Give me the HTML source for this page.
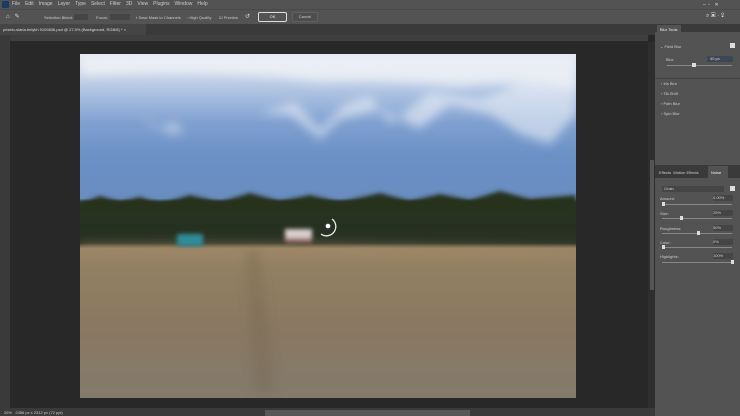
<!DOCTYPE html>
<html><head><meta charset="utf-8"><style>
*{margin:0;padding:0;box-sizing:border-box}
body{width:740px;height:416px;overflow:hidden;background:#282828;font-family:"Liberation Sans",sans-serif;font-size:5px;color:#ccc;position:relative}
.abs{position:absolute}
.menu{left:0;top:0;width:740px;height:9px;background:#535353}
.menu span{margin-right:5px}
.opt{left:0;top:9px;width:740px;height:15px;background:#535353;border-top:1px solid #4a4a4a}
.tab{left:0;top:24px;width:740px;height:11px;background:#3a3a3a}
.ruler{left:10px;top:35px;width:638px;height:7px;background:#3f3f3f;border-bottom:1px solid #2a2a2a}
.lt{left:0;top:35px;width:10px;height:373px;background:#3a3a3a}
.panel{left:655px;top:24px;width:85px;height:392px;background:#535353}
.txt{white-space:nowrap}
.o{font-size:4px;top:15px}
.btn{border:1px solid #aaa;border-radius:2px;text-align:center;line-height:8px;font-size:4px}
.field{background:#454545;height:6px}
</style></head><body>
<div class="abs menu txt" style="padding:2px 0 0 12px;line-height:5px"><span style="position:absolute;left:2px;top:1px;width:7px;height:7px;background:#1d3a66;border-radius:1px"></span><span>File</span><span>Edit</span><span>Image</span><span>Layer</span><span>Type</span><span>Select</span><span>Filter</span><span>3D</span><span>View</span><span>Plugins</span><span>Window</span><span>Help</span></div>
<div class="abs txt" style="left:703px;top:2px;color:#ddd">–&nbsp;&nbsp;▫&nbsp;&nbsp;&nbsp;✕</div>
<div class="abs opt"></div>
<div class="abs txt" style="left:6px;top:13px;color:#ddd;font-size:6px">⌂&nbsp;&nbsp;&nbsp;✎</div>
<div class="abs txt o" style="left:44px">Selection Bleed:</div><div class="abs field" style="left:74px;top:14px;width:14px"></div>
<div class="abs txt o" style="left:96px">Focus:</div><div class="abs field" style="left:110px;top:14px;width:20px"></div>
<div class="abs txt o" style="left:136px">▪ Save Mask to Channels</div>
<div class="abs txt o" style="left:187px">▫ High Quality</div>
<div class="abs txt o" style="left:219px">☑ Preview</div>
<div class="abs txt" style="left:245px;top:13px;font-size:6px;color:#ddd">↺</div>
<div class="abs btn" style="left:258px;top:12px;width:29px;height:10px;border-color:#ddd;color:#eee">OK</div>
<div class="abs btn" style="left:292px;top:12px;width:26px;height:10px;border-color:#606060;background:#4e4e4e">Cancel</div>
<div class="abs txt" style="left:706px;top:13px;color:#ddd;font-size:6px">⌕ ▣ · ⇪</div>
<div class="abs tab"></div>
<div class="abs txt" style="left:0;top:24px;width:146px;height:11px;background:#454545;padding:3px 3px;color:#ddd;font-size:4px">priselo-slaria-belykh 9109836.psd @ 27.5% (Background, RGB/8) * ×</div>
<div class="abs ruler"></div>
<div class="abs lt"></div>
<div class="abs" style="left:648px;top:42px;width:7px;height:366px;background:#2e2e2e"></div>
<div class="abs" style="left:650px;top:160px;width:4px;height:130px;background:#555"></div>
<div class="abs" style="left:0;top:408px;width:655px;height:8px;background:#3a3a3a"></div>
<div class="abs" style="left:265px;top:410px;width:205px;height:6px;background:#575757"></div>
<div class="abs txt" style="left:4px;top:410px;font-size:4px">26%&nbsp;&nbsp; 2456 px x 2312 px (72 ppi)</div>
<svg class="abs" style="left:80px;top:54px" width="496" height="344" viewBox="0 0 496 344">
<defs>
<linearGradient id="bg" x1="0" y1="0" x2="0" y2="1">
<stop offset="0" stop-color="#e2e6ee"/><stop offset=".05" stop-color="#cdd8ea"/><stop offset=".12" stop-color="#a9bfe0"/><stop offset=".2" stop-color="#7fa0d0"/><stop offset=".3" stop-color="#6b90c6"/><stop offset=".42" stop-color="#6a8dc0"/><stop offset=".43" stop-color="#2c3a2c"/><stop offset=".5" stop-color="#25301f"/><stop offset=".55" stop-color="#2c3426"/><stop offset=".565" stop-color="#9a8466"/><stop offset=".62" stop-color="#938062"/><stop offset=".8" stop-color="#897862"/><stop offset="1" stop-color="#837b6c"/></linearGradient>
<filter id="b"><feGaussianBlur stdDeviation="5"/></filter>
<filter id="b2"><feGaussianBlur stdDeviation="2"/></filter>
</defs>
<rect width="496" height="344" fill="url(#bg)"/>
<g filter="url(#b)">
<path d="M0 0 L496 0 L496 35 Q440 25 380 32 Q300 25 240 28 Q150 15 0 22Z" fill="#f0f2f6" opacity=".8"/>
<path d="M180 60 L215 48 L240 75 L265 50 L290 42 L310 70 L350 38 L400 45 L440 30 L496 25 L496 60 L470 90 L440 80 L410 60 L370 50 L340 75 L300 55 L260 65 L240 85 L210 60Z" fill="#eef2f8" opacity=".6"/>
<path d="M60 62 L75 75 L95 68 L105 78 L90 80Z" fill="#eef2f8" opacity=".5"/>
<path d="M0 190 Q250 188 496 195 L496 205 L0 205Z" fill="#a08a66" opacity=".5"/>
<path d="M165 195 L175 340 L195 340 L180 195Z" fill="#76664e" opacity=".35"/>
</g>
<g filter="url(#b2)">
<path d="M0 150 L20 142 L40 148 L60 143 L80 150 L110 141 L140 148 L170 139 L200 147 L230 141 L260 148 L300 139 L330 147 L360 140 L390 146 L420 137 L450 145 L496 141 L496 160 L0 160Z" fill="#26321f"/>
<rect x="97" y="180" width="26" height="12" fill="#2f8c9a"/>
<rect x="205" y="175" width="27" height="14" fill="#d8d0cc"/>
<rect x="205" y="184" width="27" height="5" fill="#9a6a6a"/>
</g>
<path d="M252 165 A9 9 0 1 1 241 180" fill="none" stroke="#eee" stroke-width="1.3"/>
<circle cx="248" cy="172" r="4" fill="#333"/><circle cx="248" cy="172" r="2.3" fill="#fff"/>
</svg>
<div class="abs panel"></div>
<div class="abs" style="left:655px;top:24px;width:85px;height:8px;background:#3a3a3a"></div>
<div class="abs txt" style="left:657px;top:25px;background:#535353;padding:2px 3px;color:#eee;font-size:4px">Blur Tools</div>
<div class="abs txt" style="left:660px;top:44px;font-size:4px">⌄ Field Blur</div><div class="abs" style="left:730px;top:43px;width:5px;height:5px;background:#ddd"></div>
<div class="abs txt" style="left:666px;top:57px;font-size:4px">Blur:</div><div class="abs field" style="left:707px;top:56px;width:26px;background:#3e4656;color:#ddd;padding-left:3px;font-size:4px">40 px</div>
<div class="abs" style="left:667px;top:65px;width:65px;height:1px;background:#888"></div><div class="abs" style="left:692px;top:63px;width:4px;height:4px;background:#ddd"></div>
<div class="abs" style="left:655px;top:78px;width:85px;height:1px;background:#444"></div>
<div class="abs txt" style="left:661px;top:81px;font-size:4px">› Iris Blur</div>
<div class="abs txt" style="left:661px;top:91px;font-size:4px">› Tilt-Shift</div>
<div class="abs txt" style="left:661px;top:101px;font-size:4px">› Path Blur</div>
<div class="abs txt" style="left:661px;top:111px;font-size:4px">› Spin Blur</div>
<div class="abs" style="left:655px;top:165px;width:85px;height:13px;background:#3a3a3a"></div>
<div class="abs txt" style="left:659px;top:170px;font-size:4px">Effects&nbsp; Motion Effects</div>
<div class="abs txt" style="left:708px;top:166px;width:20px;height:12px;background:#535353;padding:4px 3px;color:#eee;font-size:4px">Noise</div>
<div class="abs field" style="left:662px;top:186px;width:62px;padding-left:2px;font-size:4px">Grain</div><div class="abs" style="left:730px;top:186px;width:5px;height:5px;background:#ddd"></div>
<div class="abs txt" style="left:660px;top:196px;font-size:4px">Amount:</div><div class="abs field" style="left:713px;top:195px;width:20px;font-size:4px">0.00%</div>
<div class="abs txt" style="left:660px;top:211px;font-size:4px">Size:</div><div class="abs field" style="left:713px;top:210px;width:20px;font-size:4px">25%</div>
<div class="abs txt" style="left:660px;top:226px;font-size:4px">Roughness:</div><div class="abs field" style="left:713px;top:225px;width:20px;font-size:4px">50%</div>
<div class="abs txt" style="left:660px;top:240px;font-size:4px">Color:</div><div class="abs field" style="left:713px;top:239px;width:20px;font-size:4px">0%</div>
<div class="abs txt" style="left:660px;top:254px;font-size:4px">Highlights:</div><div class="abs field" style="left:713px;top:253px;width:20px;font-size:4px">100%</div>
<div class="abs" style="left:662px;top:204px;width:70px;height:1px;background:#888"></div><div class="abs" style="left:662px;top:202px;width:3px;height:4px;background:#ddd"></div>
<div class="abs" style="left:662px;top:218px;width:70px;height:1px;background:#888"></div><div class="abs" style="left:680px;top:216px;width:3px;height:4px;background:#ddd"></div>
<div class="abs" style="left:662px;top:233px;width:70px;height:1px;background:#888"></div><div class="abs" style="left:697px;top:231px;width:3px;height:4px;background:#ddd"></div>
<div class="abs" style="left:662px;top:247px;width:70px;height:1px;background:#888"></div><div class="abs" style="left:662px;top:245px;width:3px;height:4px;background:#ddd"></div>
<div class="abs" style="left:662px;top:262px;width:70px;height:1px;background:#888"></div><div class="abs" style="left:731px;top:260px;width:3px;height:4px;background:#ddd"></div>
</body></html>
